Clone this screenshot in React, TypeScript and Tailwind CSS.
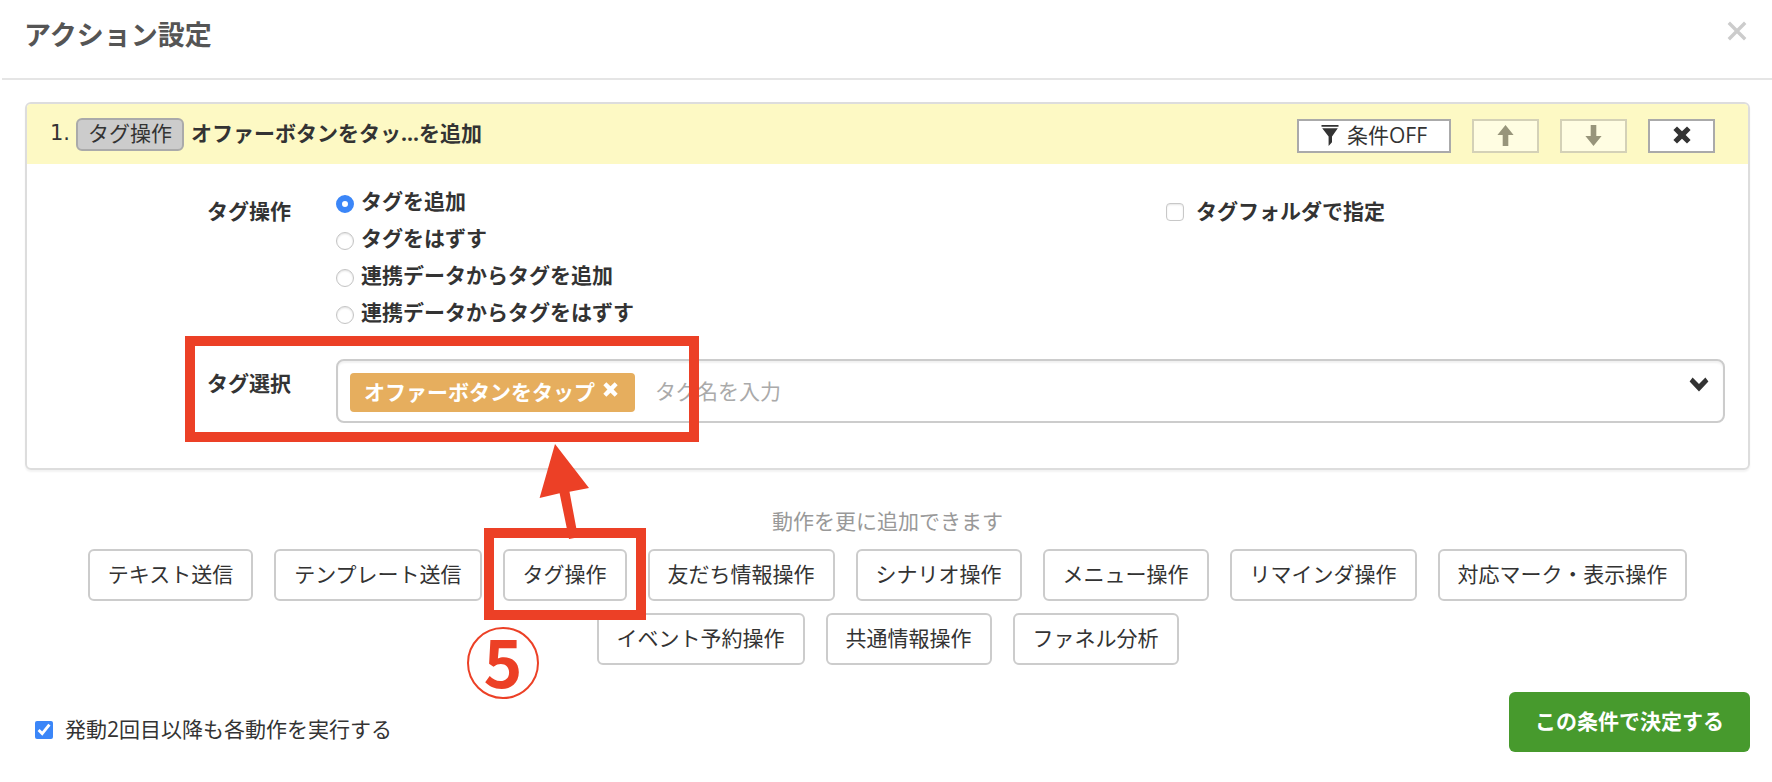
import { useState } from "react";

const ACTIONS = [
  "テキスト送信",
  "テンプレート送信",
  "タグ操作",
  "友だち情報操作",
  "シナリオ操作",
  "メニュー操作",
  "リマインダ操作",
  "対応マーク・表示操作",
  "イベント予約操作",
  "共通情報操作",
  "ファネル分析",
];

const TAG_MODES = [
  "タグを追加",
  "タグをはずす",
  "連携データからタグを追加",
  "連携データからタグをはずす",
];

function FilterIcon() {
  return (
    <svg width="18" height="21" viewBox="0 0 18 21" fill="currentColor" aria-hidden="true">
      <path d="M0.5 0h17v1.8h-17zM1.2 3.2h15.6L11 11.6v5.6L7.6 21v-9.4z" />
    </svg>
  );
}

function ArrowIcon({ down = false }: { down?: boolean }) {
  return (
    <svg width="17" height="21" viewBox="0 0 17 21" fill="currentColor" className={down ? "rotate-180" : ""} aria-hidden="true">
      <path d="M8.5 0L16.6 10h-5.3v11H5.7V10H0.4z" />
    </svg>
  );
}

function RemoveIcon({ size }: { size: number }) {
  return (
    <svg width={size} height={size} viewBox="0 0 18 18" fill="currentColor" aria-hidden="true">
      <path d="M4 0.4L9 5.2l5-4.8L17.6 4l-4.9 5 4.9 5-3.6 3.6-5-4.8-5 4.8L0.4 14l4.9-5-4.9-5z" />
    </svg>
  );
}

function Header() {
  return (
    <header className="ml-0.5 flex h-20 items-start justify-between border-b-2 border-[#e5e5e5] pr-[25px] pl-[22px]">
      <h1 className="mt-[17px] text-[27px] leading-9 font-bold text-[#555]">アクション設定</h1>
      <button type="button" aria-label="閉じる" className="mt-[21px] text-[#ccc]">
        <svg width="20" height="20" viewBox="0 0 20 20" fill="none" stroke="currentColor" strokeWidth="3.4">
          <path d="M1.8 1.8l16.4 16.4M18.2 1.8L1.8 18.2" />
        </svg>
      </button>
    </header>
  );
}

export default function App() {
  const [mode, setMode] = useState(0);
  const [useFolder, setUseFolder] = useState(false);
  const [repeat, setRepeat] = useState(true);

  return (
    <div className="relative min-h-screen bg-white font-['Open_Sans','Noto_Sans_CJK_JP',sans-serif] text-[21px] leading-8 text-[#333]">
      <Header />

      <main className="pt-[22px] pr-[22px] pl-[25px]">
        <section className="rounded-md border-2 border-[#ddd] shadow-[0_2px_2px_rgba(0,0,0,0.05)]">
          {/* アクションの見出し */}
          <div className="flex h-[60px] items-start justify-between rounded-t bg-[#fdf9c4] pt-[13px] pr-[33px] pl-[23px]">
            <div className="flex items-center">
              <span className="pb-0.5 font-['DejaVu_Sans',sans-serif]">1.</span>
              <span className="mr-[7px] ml-[6px] flex h-[33px] items-center rounded-md border-2 border-[#aaa] bg-[#ccc] px-2.5 pb-0.5">
                タグ操作
              </span>
              <strong className="pb-0.5">オファーボタンをタッ...を追加</strong>
            </div>
            <div className="mt-0.5 flex gap-[21px]">
              <button type="button" className="flex h-[34px] items-center gap-2 border-2 border-[#aaa] bg-white px-[22px] pb-0.5">
                <FilterIcon />
                条件OFF
              </button>
              <button type="button" disabled aria-label="上へ" className="flex h-[34px] w-[67px] items-center justify-center border-2 border-[#d4d1b7] bg-[#fffde2] pb-0.5 text-[#98957b]">
                <ArrowIcon />
              </button>
              <button type="button" disabled aria-label="下へ" className="flex h-[34px] w-[67px] items-center justify-center border-2 border-[#d4d1b7] bg-[#fffde2] pb-0.5 text-[#98957b]">
                <ArrowIcon down />
              </button>
              <button type="button" aria-label="削除" className="flex h-[34px] w-[67px] items-center justify-center border-2 border-[#aaa] bg-white pb-0.5">
                <RemoveIcon size={18} />
              </button>
            </div>
          </div>

          <div className="pt-[21px] pr-[23px] pb-[45px] pl-[180px] font-bold">
            {/* タグ操作 */}
            <div className="flex items-start">
              <div id="mode-label" className="mt-2.5 w-[129px]">タグ操作</div>
              <div role="radiogroup" aria-labelledby="mode-label" className="flex flex-1 flex-col gap-[5px]">
                {TAG_MODES.map((label, i) => (
                  <label key={label} className="flex items-center gap-[7px]">
                    <input
                      type="radio"
                      name="tag-mode"
                      checked={mode === i}
                      onChange={() => setMode(i)}
                      className="mt-1.5 size-[18px] appearance-none rounded-full border border-[#c4c4c4] bg-white shadow-[inset_0_1px_2px_rgba(0,0,0,0.12)] checked:border-[6px] checked:border-[#3b86f8] checked:shadow-none"
                    />
                    {label}
                  </label>
                ))}
              </div>
              <label className="mt-2.5 mr-[340px] flex items-center gap-3">
                <input
                  type="checkbox"
                  checked={useFolder}
                  onChange={() => setUseFolder(!useFolder)}
                  className="mt-0.5 size-[18px] appearance-none rounded border border-[#c8c8c8] bg-white shadow-[inset_0_1px_2px_rgba(0,0,0,0.1)] checked:bg-[#3b86f8]"
                />
                タグフォルダで指定
              </label>
            </div>

            {/* タグ選択 */}
            <div className="mt-[31px] flex items-start">
              <label htmlFor="tag-name" className="mt-2 w-[129px]">タグ選択</label>
              <div className="flex h-16 flex-1 items-center rounded-lg border-2 border-[#ccc] pr-[14px] pl-3 shadow-[inset_0_2px_2px_rgba(0,0,0,0.06)]">
                <span className="mt-0.5 flex h-[39px] items-center rounded bg-[#e6ae5e] pr-[17px] pl-[14px] text-white">
                  オファーボタンをタップ
                  <button type="button" aria-label="タグを外す" className="mb-1.5 ml-2">
                    <RemoveIcon size={15} />
                  </button>
                </span>
                <input
                  id="tag-name"
                  type="text"
                  placeholder="タグ名を入力"
                  className="ml-5 min-w-0 flex-1 font-normal outline-none placeholder:text-[#aaa]"
                />
                <button type="button" aria-label="一覧を開く" className="mb-3.5">
                  <svg width="20" height="15" viewBox="0 0 20 15" fill="currentColor">
                    <path d="M3.6 0.6L10 7l6.4-6.4L19.4 4.6 10 14.4 0.6 4.6z" />
                  </svg>
                </button>
              </div>
            </div>
          </div>
        </section>

        {/* 動作の追加 */}
        <p className="mt-[35px] text-center text-[#999]">動作を更に追加できます</p>
        <div className="mx-auto mt-3 flex max-w-[1640px] flex-wrap justify-center gap-x-[21px] gap-y-3">
          {ACTIONS.map((name) => (
            <button key={name} type="button" className="h-[52px] rounded-md border-2 border-[#ccc] bg-white px-[18px] pb-0.5">
              {name}
            </button>
          ))}
        </div>

        <footer className="mt-[27px] flex items-start justify-between pl-2.5">
          <label className="mt-[21px] flex items-center gap-3">
            <input type="checkbox" checked={repeat} onChange={() => setRepeat(!repeat)} className="mt-0.5 size-[18px] accent-[#3b86f8]" />
            発動2回目以降も各動作を実行する
          </label>
          <button type="button" className="h-[60px] rounded-md bg-[#479a2d] px-[26px] pb-0.5 font-bold text-white">
            この条件で決定する
          </button>
        </footer>
      </main>

      {/* 手順の注釈 */}
      <div className="pointer-events-none absolute top-[336px] left-[185px] h-[106px] w-[514px] border-10 border-[#ec4026]" />
      <div className="pointer-events-none absolute top-[528px] left-[484px] h-[92px] w-[162px] border-10 border-[#ec4026]" />
      <svg className="pointer-events-none absolute top-[440px] left-[530px]" width="70" height="100" viewBox="0 0 70 100" fill="#ec4026" aria-hidden="true">
        <path d="M25 4L59 48 39.5 51.7 47 92v5.5L39 99 29.6 53.3 9.6 58z" />
      </svg>
      <div className="pointer-events-none absolute top-[627px] left-[467px] flex size-[72px] items-center justify-center rounded-full border-2 border-[#ec4026] pb-2 font-['Noto_Sans_CJK_JP',sans-serif] text-[66px] leading-none font-bold text-[#ec4026]">
        5
      </div>
    </div>
  );
}
